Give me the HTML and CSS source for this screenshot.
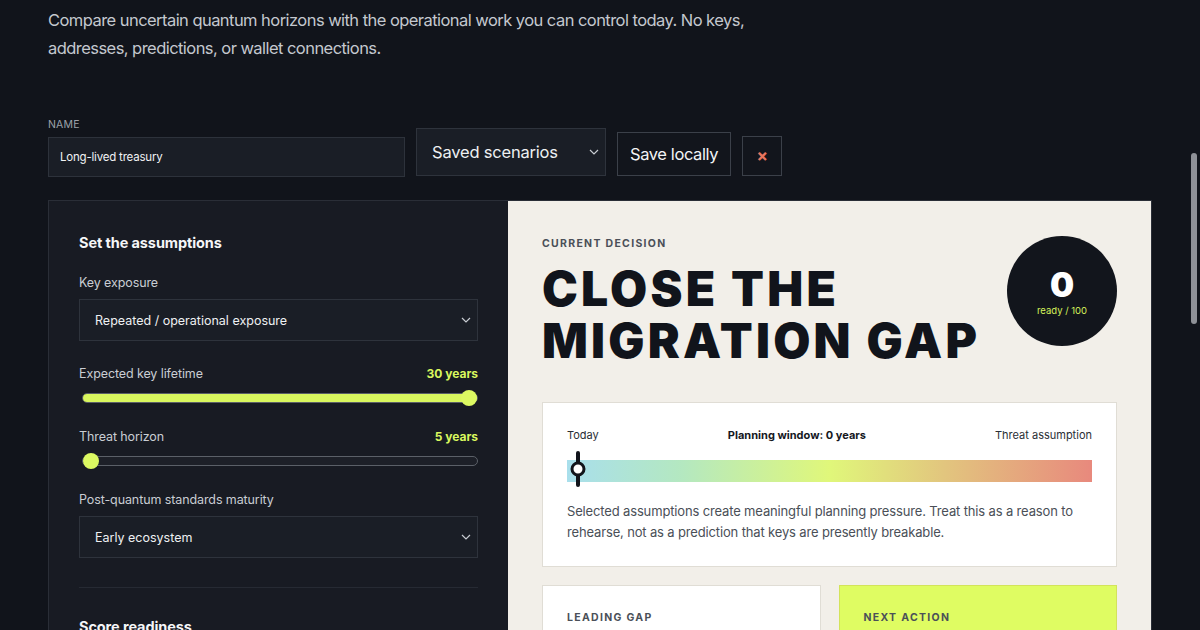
FILE: index.html
```html
<!DOCTYPE html>
<html lang="en">
<head>
<meta charset="utf-8">
<title>Quantum readiness planner</title>
<link rel="stylesheet" href="styles.css">
</head>
<body>
<main class="page">
  <p class="intro">Compare uncertain quantum horizons with the operational work you can control today. No keys, addresses, predictions, or wallet connections.</p>

  <div class="toolbar">
    <label class="field name-field">
      <span class="field-label">NAME</span>
      <span class="text-input">Long-lived treasury</span>
    </label>
    <div class="select big-select">
      <span>Saved scenarios</span>
      <svg class="chev" viewBox="0 0 10 6" width="10" height="6"><path d="M1 1l4 4 4-4" fill="none" stroke="currentColor" stroke-width="1.2"/></svg>
    </div>
    <button class="btn">Save locally</button>
    <button class="btn btn-x">×</button>
  </div>

  <section class="board">
    <div class="panel-left">
      <h2 class="panel-title">Set the assumptions</h2>

      <div class="ctrl ctrl-first">
        <div class="ctrl-label">Key exposure</div>
        <div class="select small-select">
          <span>Repeated / operational exposure</span>
          <svg class="chev" viewBox="0 0 10 6" width="10" height="6"><path d="M1 1l4 4 4-4" fill="none" stroke="currentColor" stroke-width="1.2"/></svg>
        </div>
      </div>

      <div class="ctrl ctrl-range">
        <div class="ctrl-row"><span class="ctrl-label">Expected key lifetime</span><span class="ctrl-value">30 years</span></div>
        <div class="range"><div class="range-fill" style="width:100%"></div><div class="range-thumb" style="left:calc(8px + (100% - 16px) * 1)"></div></div>
      </div>

      <div class="ctrl ctrl-range">
        <div class="ctrl-row"><span class="ctrl-label">Threat horizon</span><span class="ctrl-value">5 years</span></div>
        <div class="range"><div class="range-fill" style="width:0%"></div><div class="range-thumb" style="left:calc(8px + (100% - 16px) * 0)"></div></div>
      </div>

      <div class="ctrl ctrl-after-range">
        <div class="ctrl-label">Post-quantum standards maturity</div>
        <div class="select small-select">
          <span>Early ecosystem</span>
          <svg class="chev" viewBox="0 0 10 6" width="10" height="6"><path d="M1 1l4 4 4-4" fill="none" stroke="currentColor" stroke-width="1.2"/></svg>
        </div>
      </div>

      <hr class="divider">

      <h2 class="panel-title">Score readiness</h2>
    </div>

    <div class="panel-right">
      <div class="decision-head">
        <div>
          <div class="eyebrow">CURRENT DECISION</div>
          <h1 class="decision">CLOSE THE<br>MIGRATION GAP</h1>
        </div>
        <div class="score">
          <span class="score-num">0</span>
          <span class="score-sub">ready / 100</span>
        </div>
      </div>

      <div class="timeline">
        <div class="tl-labels">
          <span>Today</span>
          <strong>Planning window: 0 years</strong>
          <span>Threat assumption</span>
        </div>
        <div class="tl-bar">
          <div class="tl-marker"></div>
        </div>
        <p class="tl-text">Selected assumptions create meaningful planning pressure. Treat this as a reason to rehearse, not as a prediction that keys are presently breakable.</p>
      </div>

      <div class="cards">
        <div class="card card-white"><div class="eyebrow">LEADING GAP</div></div>
        <div class="card card-lime"><div class="eyebrow">NEXT ACTION</div></div>
      </div>
    </div>
  </section>
</main>
<div class="scrollbar"></div>
</body>
</html>
```

FILE: styles.css
```css
html, body {
  margin: 0;
  padding: 0;
  background: #11141b;
  overflow: hidden;
}
body {
  font-family: "Inter", "Noto Sans", sans-serif;
  color: #e8eaee;
}
.page {
  padding: 6px 48px 0 48px;
  width: 1104px;
}
.intro {
  margin: 0;
  font-size: 16.5px;
  line-height: 28px;
  color: #c4c8cf;
  max-width: 720px;
  letter-spacing: -0.55px;
}
.toolbar {
  margin-top: 56px;
  display: flex;
  align-items: flex-end;
  gap: 11px;
}
.field {
  display: flex;
  flex-direction: column;
}
.field-label {
  font-size: 10.5px;
  color: #9ba1aa;
  margin-bottom: 6px;
  letter-spacing: 0.2px;
}
.text-input {
  width: 333px;
  height: 38px;
  border: 1px solid #2d323b;
  background: #1a1e26;
  padding: 0 11px;
  font-size: 11.5px;
  line-height: 38px;
  color: #f1f2f4;
  letter-spacing: -0.2px;
}
.select {
  display: flex;
  align-items: center;
  justify-content: space-between;
  border: 1px solid #2e333c;
  background: #1a1e26;
  color: #eef0f2;
  box-sizing: border-box;
}
.big-select {
  width: 190px;
  height: 48px;
  padding: 0 6px 0 15px;
  font-size: 16.5px;
  margin-bottom: 1px;
  letter-spacing: -0.2px;
}
.chev { color: #c8ccd2; }
.btn {
  font-family: inherit;
  background: #12151c;
  border: 1px solid #3b4049;
  color: #f3f4f6;
  font-size: 16.5px;
  height: 44px;
  padding: 0 12px;
  margin: 0 0 1px 0;
  letter-spacing: -0.4px;
}
.btn-x {
  width: 40px;
  height: 40px;
  padding: 0;
  color: #e6755f;
  font-size: 17px;
  font-weight: 700;
}
.board {
  margin-top: 23px;
  display: grid;
  grid-template-columns: 459px 1fr;
  border: 1px solid #2a2e37;
  height: 440px;
  overflow: hidden;
}
.panel-left {
  background: #181b23;
  padding: 33px 30px 0 30px;
}
.panel-title {
  margin: 0;
  font-size: 14.5px;
  font-weight: 700;
  color: #f5f6f8;
  letter-spacing: -0.1px;
}
.ctrl-first { margin-top: 24px; }
.ctrl-range { margin-top: 25px; }
.ctrl-range + .ctrl-range { margin-top: 26px; }
.ctrl-after-range { margin-top: 26px; }
.ctrl-label {
  font-size: 12.5px;
  color: #c9cdd3;
  letter-spacing: -0.1px;
}
.ctrl-row {
  display: flex;
  justify-content: space-between;
  align-items: baseline;
}
.ctrl-value {
  font-size: 12px;
  font-weight: 700;
  color: #d9f75e;
}
.small-select {
  margin-top: 9px;
  height: 42px;
  padding: 0 6px 0 15px;
  font-size: 12.5px;
}
.range {
  position: relative;
  height: 8px;
  margin: 12px 0 0 3px;
  border: 1px solid #5b6068;
  border-radius: 5px;
  background: #1d2028;
}
.range-fill {
  height: 100%;
  background: #d9f75e;
  border-radius: 5px;
}
.range-thumb {
  position: absolute;
  top: 50%;
  width: 16px;
  height: 16px;
  border-radius: 50%;
  background: #dcf962;
  transform: translate(-50%, -50%);
}
.divider {
  margin: 29px 0 0 0;
  border: 0;
  border-top: 1px solid #262a33;
}
.divider + .panel-title {
  margin-top: 30px;
}
.panel-right {
  background: #f2efe9;
  padding: 36px 34px 0 34px;
}
.decision-head {
  display: flex;
  justify-content: space-between;
  align-items: flex-start;
}
.eyebrow {
  font-size: 10.5px;
  font-weight: 700;
  letter-spacing: 1.3px;
  color: #4b5058;
}
.decision {
  margin: 13px 0 0 0;
  font-family: "Inter", sans-serif;
  font-weight: 900;
  font-size: 48px;
  line-height: 52px;
  color: #11141b;
  letter-spacing: 3.2px;
}
.score {
  width: 110px;
  height: 110px;
  border-radius: 50%;
  background: #12151c;
  display: flex;
  flex-direction: column;
  align-items: center;
  justify-content: center;
  margin-top: -1px;
}
.score-num {
  font-size: 34px;
  font-weight: 900;
  color: #fff;
  line-height: 36px;
}
.score-sub {
  font-size: 9.5px;
  color: #d5f25a;
  margin-top: 2px;
}
.timeline {
  margin-top: 35px;
  background: #ffffff;
  border: 1px solid #e0ddd5;
  padding: 25px 24px 23px 24px;
}
.tl-labels {
  display: flex;
  justify-content: space-between;
  font-size: 11px;
  color: #2a2e35;
}
.tl-labels strong { font-weight: 700; color: #15181e; }
.tl-bar {
  position: relative;
  margin-top: 18px;
  height: 22px;
  background: linear-gradient(90deg, #a9dfec 0%, #b4e8c0 22%, #e0f77a 50%, #e2c57e 72%, #e8897d 100%);
}
.tl-marker {
  position: absolute;
  left: 9px;
  top: -9px;
  width: 4px;
  height: 36px;
  background: #11141b;
  border-radius: 2px;
}
.tl-marker::after {
  content: "";
  position: absolute;
  left: 50%;
  top: 50%;
  width: 9px;
  height: 9px;
  border: 3px solid #11141b;
  border-radius: 50%;
  background: #fff;
  transform: translate(-50%, -50%);
}
.tl-text {
  margin: 19px 0 0 0;
  font-size: 13px;
  line-height: 21px;
  color: #4a4f57;
  letter-spacing: -0.15px;
}
.cards {
  margin-top: 18px;
  display: grid;
  grid-template-columns: 1fr 1fr;
  gap: 18px;
}
.card {
  height: 80px;
  padding: 25px 24px;
  border: 1px solid #e0ddd5;
}
.card-white { background: #fff; }
.card-lime { background: #dffc62; border-color: #d3e35a; }
.scrollbar {
  position: fixed;
  right: 3px;
  top: 153px;
  width: 6px;
  height: 171px;
  border-radius: 3px;
  background: #8e9197;
}
```
